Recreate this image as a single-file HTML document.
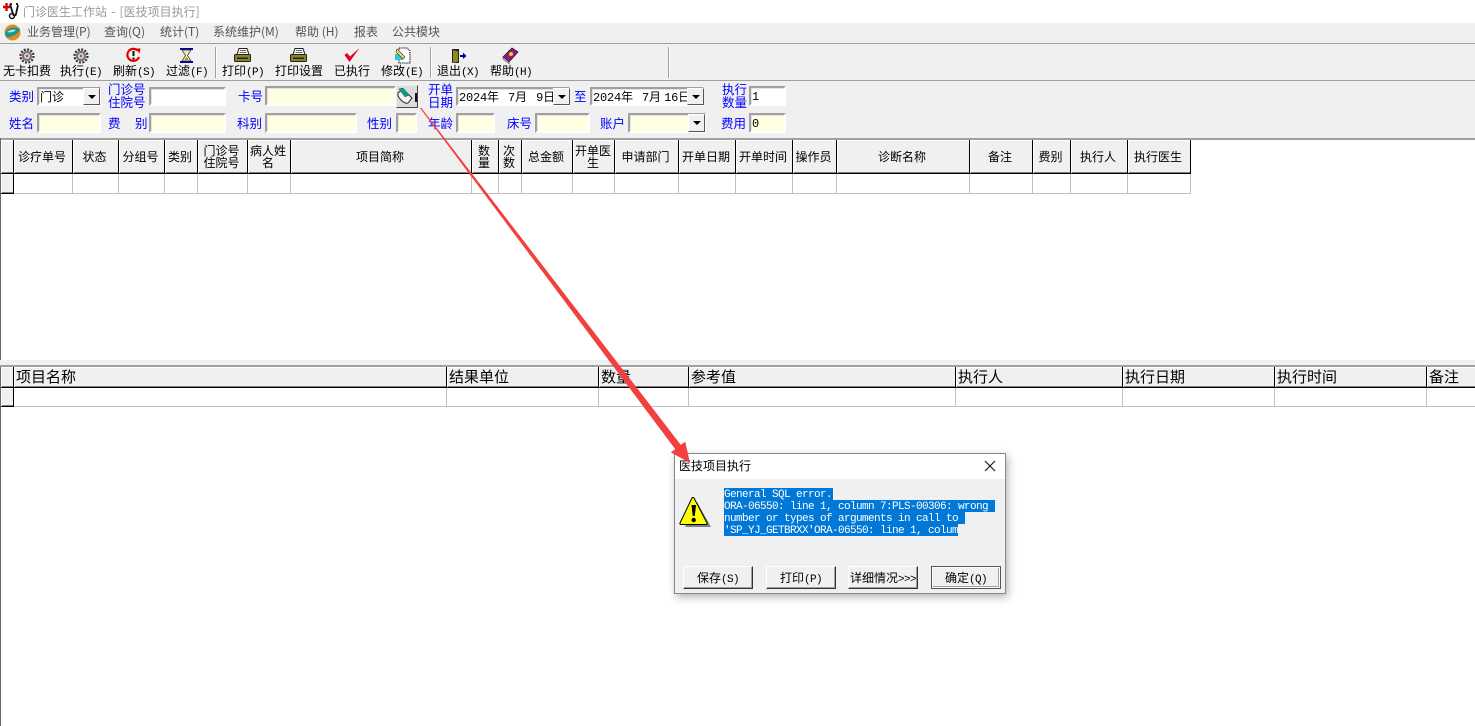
<!DOCTYPE html>
<html lang="zh"><head><meta charset="utf-8"><title>门诊医生工作站</title>
<style>
html,body{margin:0;padding:0;background:#fff}
#p{position:relative;width:1475px;height:726px;overflow:hidden;background:#fff;font:12px/12px "WenQuanYi Zen Hei","Noto Sans CJK SC","Liberation Sans",sans-serif;color:#000}
#p div,#p svg{position:absolute;box-sizing:border-box}
.t{white-space:nowrap;height:12px;line-height:12px}
.b{color:#0000ff;font-size:12.5px}
.m{color:#555;white-space:nowrap;height:12px;top:26px}
.tb{white-space:nowrap;top:65px;height:12px}
.L{font-family:"Liberation Mono",monospace;font-size:11px;letter-spacing:-.6px;white-space:pre}
.D{font-family:"Liberation Mono",monospace;font-size:12px;letter-spacing:-.2px;white-space:pre}
.sep{top:47px;width:2px;height:31px;border-left:1px solid #a0a0a0;border-right:1px solid #fff}
.i{border:2px solid;border-color:#a0a0a0 #fff #fff #a0a0a0;background:#ffffe1;box-shadow:inset 1px 1px 0 #e3e3e3;font-size:12px;padding:2px 0 0 1px;white-space:nowrap}
.w{background:#fff}
.dd{width:17px;background:#f0f0f0;border:1px solid;border-color:#fff #555 #555 #fff}
.dd:after{content:"";position:absolute;left:4px;top:6px;border:4px solid transparent;border-top:4px solid #000;border-bottom:0}
.h{background:#f0f0f0;border-right:1px solid #000;border-bottom:1px solid #000;box-shadow:inset 1px 1px 0 #fff,inset 0 -1px 0 #808080;text-align:center;align-items:center;justify-content:center;line-height:12px;overflow:hidden;padding-right:2px}
#p .h{display:flex}
#p .q{font-size:15px;justify-content:flex-start;padding-left:2px;padding-right:0}
.c{border-right:1px solid #c0c0c0;border-bottom:1px solid #c0c0c0;background:#fff}
.dbtn{top:566px;width:70px;height:23px;background:#f0f0f0;border:1px solid;border-color:#fff #333 #333 #fff;box-shadow:inset -1px -1px 0 #a0a0a0;text-align:center;line-height:21px}
.sel{left:724px;height:12px;background:#0078d7;color:#fff;font:11px/15px "Liberation Mono",monospace;letter-spacing:-.6px;white-space:pre}
</style></head><body><div id="p">

<!-- title -->
<svg style="left:2px;top:1px" width="18" height="19" viewBox="0 0 18 19"><path d="M1 6h7M4.500 2v8" stroke="#e00000" stroke-width="2.400" fill="none"/><path d="M8 3l3 10c.5 2 2.500 2 3 0l2-9M10 3l-2 0M16 3l-2 0" stroke="#111" stroke-width="1.800" fill="none"/><circle cx="10" cy="15" r="2.500" fill="none" stroke="#111" stroke-width="1.500"/></svg>
<div class="t" style="left:23px;top:6px;color:#999;font-size:12px;word-spacing:1.500px">门诊医生工作站 - [医技项目执行]</div>

<!-- menu -->
<div style="left:0;top:23px;width:1475px;height:20px;background:#f0f0f0"></div>
<svg style="left:4px;top:24px" width="17" height="17" viewBox="0 0 17 17"><circle cx="8.500" cy="8.500" r="8" fill="#e98a1f"/><path d="M1 9c3-6 10-7 15-4-1 5-9 9-14 8z" fill="#17988c"/><path d="M3 8c3-2 6-3 9-2-2 2-6 3-9 2z" fill="#bfe6e0"/></svg>
<div class="m" style="left:27px">业务管理(P)</div>
<div class="m" style="left:104px">查询(Q)</div>
<div class="m" style="left:160px">统计(T)</div>
<div class="m" style="left:213px">系统维护(M)</div>
<div class="m" style="left:295px">帮助 (H)</div>
<div class="m" style="left:354px">报表</div>
<div class="m" style="left:392px">公共模块</div>

<!-- toolbar + form bg -->
<div style="left:0;top:43px;width:1475px;height:96px;background:#f0f0f0"></div>
<div style="left:0;top:43px;width:1475px;height:1px;background:#a0a0a0"></div>
<div style="left:0;top:80px;width:1475px;height:1px;background:#a0a0a0"></div>
<div class="sep" style="left:215px"></div><div class="sep" style="left:430px"></div><div class="sep" style="left:668px"></div>

<svg style="left:19px;top:48px" width="16" height="16" viewBox="0 0 16 16"><circle cx="8" cy="8" r="5.200" fill="#777"/><circle cx="8" cy="8" r="6.500" fill="none" stroke="#333" stroke-width="2.200" stroke-dasharray="2 1.400"/><circle cx="8" cy="8" r="3" fill="#e8c8c8"/><circle cx="8" cy="8" r="1.200" fill="#666"/></svg>
<svg style="left:73px;top:48px" width="16" height="16" viewBox="0 0 16 16"><circle cx="8" cy="8" r="5.200" fill="#777"/><circle cx="8" cy="8" r="6.500" fill="none" stroke="#333" stroke-width="2.200" stroke-dasharray="2 1.400"/><circle cx="8" cy="8" r="3" fill="#e8c8c8"/><circle cx="8" cy="8" r="1.200" fill="#666"/></svg>
<svg style="left:125px;top:47px" width="17" height="17" viewBox="0 0 17 17"><path d="M12.500 3.500A6 6 0 1 0 14 10" fill="none" stroke="#e00000" stroke-width="2.200"/><path d="M10.500 1.500l5 0-1 5z" fill="#e00000"/><rect x="7.500" y="4" width="2" height="5" fill="#111"/><rect x="7.500" y="10.500" width="2" height="2" fill="#111"/></svg>
<svg style="left:179px;top:47px" width="15" height="17" viewBox="0 0 15 17"><rect x="1" y="1" width="13" height="2" fill="#0000a0"/><rect x="1" y="14" width="13" height="2" fill="#0000a0"/><path d="M3 3h9L8.500 8.500 12 14H3l3.500-5.500z" fill="#f0e8b0" stroke="#333" stroke-width=".7"/><path d="M5.500 13l2-3 2 3z" fill="#c08020"/></svg>
<svg style="left:234px;top:48px" width="17" height="15" viewBox="0 0 17 15"><path d="M5 .5h8l2 6H3z" fill="#fff" stroke="#222"/><path d="M6 2.500h6M5.500 4.500h7" stroke="#333" stroke-width=".7"/><rect x=".5" y="6.500" width="16" height="7" rx="1" fill="#8a8520" stroke="#222"/><rect x="3" y="9.500" width="11" height="1.500" fill="#222"/></svg>
<svg style="left:290px;top:48px" width="17" height="15" viewBox="0 0 17 15"><path d="M5 .5h8l2 6H3z" fill="#fff" stroke="#222"/><path d="M6 2.500h6M5.500 4.500h7" stroke="#333" stroke-width=".7"/><rect x=".5" y="6.500" width="16" height="7" rx="1" fill="#8a8520" stroke="#222"/><rect x="3" y="9.500" width="11" height="1.500" fill="#222"/></svg>
<svg style="left:344px;top:47px" width="16" height="16" viewBox="0 0 16 16"><path d="M.5 8l5 7L15.500 1 6 9.500 3 6z" fill="#e8001c"/></svg>
<svg style="left:394px;top:47px" width="17" height="17" viewBox="0 0 17 17"><path d="M5 1h8l3 3v12H5z" fill="#fff" stroke="#222" stroke-dasharray="1.500 .7"/><rect x="1" y="7" width="8" height="6" fill="#30c8d8"/><path d="M3 2l8 8-2 2-7-7z" fill="#f2e050" stroke="#333" stroke-width=".6"/></svg>
<svg style="left:451px;top:48px" width="16" height="16" viewBox="0 0 16 16"><path d="M1 1h7v14H1z" fill="#222"/><path d="M2 2l5 1.500v10L2 15z" fill="#8f8a1d"/><path d="M9 7h3V4.500L15.500 8 12 11V9H9z" fill="#000090"/></svg>
<svg style="left:502px;top:47px" width="17" height="17" viewBox="0 0 17 17"><path d="M1 10L10 1l6 4-9 10z" fill="#8e1a7e" stroke="#311" stroke-width=".8"/><path d="M1 10l6 5v1.500L1 12z" fill="#eee" stroke="#333" stroke-width=".6"/><circle cx="9" cy="7" r="2" fill="#e8d020"/></svg>

<div class="tb" style="left:3px">无卡扣费</div>
<div class="tb" style="left:60px">执行<span class="L">(E)</span></div>
<div class="tb" style="left:113px">刷新<span class="L">(S)</span></div>
<div class="tb" style="left:166px">过滤<span class="L">(F)</span></div>
<div class="tb" style="left:222px">打印<span class="L">(P)</span></div>
<div class="tb" style="left:275px">打印设置</div>
<div class="tb" style="left:334px">已执行</div>
<div class="tb" style="left:381px">修改<span class="L">(E)</span></div>
<div class="tb" style="left:437px">退出<span class="L">(X)</span></div>
<div class="tb" style="left:490px">帮助<span class="L">(H)</span></div>

<!-- form row 1 -->
<div class="t b" style="left:9px;top:90px">类别</div>
<div class="i w" style="left:37px;top:87px;width:64px;height:19px">门诊</div>
<div class="dd" style="left:83px;top:88px;height:17px"></div>
<div class="t b" style="left:108px;top:83px">门诊号</div>
<div class="t b" style="left:108px;top:96px">住院号</div>
<div class="i w" style="left:149px;top:87px;width:77px;height:19px"></div>
<div class="t b" style="left:238px;top:90px">卡号</div>
<div class="i" style="left:265px;top:86px;width:131px;height:20px"></div>
<div style="left:396px;top:85px;width:22px;height:23px;background:#dcdcdc;border:1px solid;border-color:#eee #444 #444 #eee"></div>
<svg style="left:397px;top:87px" width="16" height="19" viewBox="0 0 16 19"><path d="M1 6l5-4 9 9-4 5c-3 1-7-2-10-7z" fill="#f4f4f4" stroke="#222"/><path d="M2 2l4-1 6 7-4 2z" fill="#0a9f80" stroke="#245" stroke-width=".5"/></svg>
<div style="left:415px;top:93px;width:2px;height:9px;background:#111"></div>
<div class="t b" style="left:428px;top:83px">开单</div>
<div class="t b" style="left:428px;top:96px">日期</div>
<div class="i w" style="left:456px;top:87px;width:114px;height:19px;padding-left:1px"><span class="D">2024</span>年<span class="D" style="margin-left:9px">7</span>月<span class="D" style="margin-left:9px">9</span>日</div>
<div class="dd" style="left:553px;top:88px;height:17px"></div>
<div class="t b" style="left:574px;top:90px">至</div>
<div class="i w" style="left:590px;top:87px;width:114px;height:19px;padding-left:1px"><span class="D">2024</span>年<span class="D" style="margin-left:9px">7</span>月<span class="D" style="margin-left:3px">16</span>日</div>
<div class="dd" style="left:687px;top:88px;height:17px"></div>
<div class="t b" style="left:722px;top:83px">执行</div>
<div class="t b" style="left:722px;top:96px">数量</div>
<div class="i w" style="left:749px;top:86px;width:37px;height:20px"><span class="D">1</span></div>

<!-- form row 2 -->
<div class="t b" style="left:9px;top:117px">姓名</div>
<div class="i" style="left:37px;top:113px;width:64px;height:20px"></div>
<div class="t b" style="left:108px;top:117px">费</div>
<div class="t b" style="left:135px;top:117px">别</div>
<div class="i" style="left:149px;top:113px;width:77px;height:20px"></div>
<div class="t b" style="left:237px;top:117px">科别</div>
<div class="i" style="left:265px;top:113px;width:92px;height:20px"></div>
<div class="t b" style="left:367px;top:117px">性别</div>
<div class="i" style="left:396px;top:113px;width:21px;height:20px"></div>
<div class="t b" style="left:428px;top:117px">年龄</div>
<div class="i" style="left:456px;top:113px;width:39px;height:20px"></div>
<div class="t b" style="left:507px;top:117px">床号</div>
<div class="i" style="left:535px;top:113px;width:55px;height:20px"></div>
<div class="t b" style="left:600px;top:117px">账户</div>
<div class="i" style="left:628px;top:113px;width:78px;height:20px"></div>
<div class="dd" style="left:688px;top:114px;height:18px"></div>
<div class="t b" style="left:721px;top:117px">费用</div>
<div class="i" style="left:749px;top:113px;width:37px;height:20px"><span class="D">0</span></div>

<!-- top grid -->
<div style="left:0;top:138px;width:1475px;height:2px;background:#a0a0a0"></div>
<div style="left:0;top:138px;width:1px;height:588px;background:#666"></div>
<div class="h" style="left:1px;top:140px;width:13px;height:34px"></div>
<div class="h" style="left:1px;top:174px;width:13px;height:20px"></div>
<div class="h" style="left:14px;top:140px;width:59px;height:34px">诊疗单号</div><div class="c" style="left:14px;top:174px;width:59px;height:20px"></div>
<div class="h" style="left:73px;top:140px;width:46px;height:34px">状态</div><div class="c" style="left:73px;top:174px;width:46px;height:20px"></div>
<div class="h" style="left:119px;top:140px;width:46px;height:34px">分组号</div><div class="c" style="left:119px;top:174px;width:46px;height:20px"></div>
<div class="h" style="left:165px;top:140px;width:33px;height:34px">类别</div><div class="c" style="left:165px;top:174px;width:33px;height:20px"></div>
<div class="h" style="left:198px;top:140px;width:50px;height:34px">门诊号<br>住院号</div><div class="c" style="left:198px;top:174px;width:50px;height:20px"></div>
<div class="h" style="left:248px;top:140px;width:43px;height:34px">病人姓<br>名</div><div class="c" style="left:248px;top:174px;width:43px;height:20px"></div>
<div class="h" style="left:291px;top:140px;width:181px;height:34px">项目简称</div><div class="c" style="left:291px;top:174px;width:181px;height:20px"></div>
<div class="h" style="left:472px;top:140px;width:27px;height:34px">数<br>量</div><div class="c" style="left:472px;top:174px;width:27px;height:20px"></div>
<div class="h" style="left:499px;top:140px;width:23px;height:34px">次<br>数</div><div class="c" style="left:499px;top:174px;width:23px;height:20px"></div>
<div class="h" style="left:522px;top:140px;width:51px;height:34px">总金额</div><div class="c" style="left:522px;top:174px;width:51px;height:20px"></div>
<div class="h" style="left:573px;top:140px;width:42px;height:34px;padding-right:1px">开单医<br>生</div><div class="c" style="left:573px;top:174px;width:42px;height:20px"></div>
<div class="h" style="left:615px;top:140px;width:64px;height:34px">申请部门</div><div class="c" style="left:615px;top:174px;width:64px;height:20px"></div>
<div class="h" style="left:679px;top:140px;width:57px;height:34px">开单日期</div><div class="c" style="left:679px;top:174px;width:57px;height:20px"></div>
<div class="h" style="left:736px;top:140px;width:57px;height:34px">开单时间</div><div class="c" style="left:736px;top:174px;width:57px;height:20px"></div>
<div class="h" style="left:793px;top:140px;width:44px;height:34px">操作员</div><div class="c" style="left:793px;top:174px;width:44px;height:20px"></div>
<div class="h" style="left:837px;top:140px;width:133px;height:34px">诊断名称</div><div class="c" style="left:837px;top:174px;width:133px;height:20px"></div>
<div class="h" style="left:970px;top:140px;width:63px;height:34px">备注</div><div class="c" style="left:970px;top:174px;width:63px;height:20px"></div>
<div class="h" style="left:1033px;top:140px;width:38px;height:34px">费别</div><div class="c" style="left:1033px;top:174px;width:38px;height:20px"></div>
<div class="h" style="left:1071px;top:140px;width:57px;height:34px">执行人</div><div class="c" style="left:1071px;top:174px;width:57px;height:20px"></div>
<div class="h" style="left:1128px;top:140px;width:63px;height:34px">执行医生</div><div class="c" style="left:1128px;top:174px;width:63px;height:20px"></div>

<!-- splitter -->
<div style="left:0;top:360px;width:1475px;height:5px;background:#f0f0f0"></div>

<!-- bottom grid -->
<div style="left:0;top:365px;width:1475px;height:2px;background:#a0a0a0"></div>
<div class="h" style="left:1px;top:367px;width:13px;height:21px"></div>
<div class="h" style="left:1px;top:388px;width:13px;height:19px"></div>
<div class="h q" style="left:14px;top:367px;width:433px;height:21px">项目名称</div><div class="c" style="left:14px;top:388px;width:433px;height:19px"></div>
<div class="h q" style="left:447px;top:367px;width:152px;height:21px">结果单位</div><div class="c" style="left:447px;top:388px;width:152px;height:19px"></div>
<div class="h q" style="left:599px;top:367px;width:90px;height:21px">数量</div><div class="c" style="left:599px;top:388px;width:90px;height:19px"></div>
<div class="h q" style="left:689px;top:367px;width:267px;height:21px">参考值</div><div class="c" style="left:689px;top:388px;width:267px;height:19px"></div>
<div class="h q" style="left:956px;top:367px;width:167px;height:21px">执行人</div><div class="c" style="left:956px;top:388px;width:167px;height:19px"></div>
<div class="h q" style="left:1123px;top:367px;width:152px;height:21px">执行日期</div><div class="c" style="left:1123px;top:388px;width:152px;height:19px"></div>
<div class="h q" style="left:1275px;top:367px;width:152px;height:21px">执行时间</div><div class="c" style="left:1275px;top:388px;width:152px;height:19px"></div>
<div class="h q" style="left:1427px;top:367px;width:60px;height:21px">备注</div><div class="c" style="left:1427px;top:388px;width:60px;height:19px"></div>

<!-- dialog -->
<div style="left:674px;top:453px;width:332px;height:141px;background:#f0f0f0;border:1px solid #888;box-shadow:2px 3px 8px rgba(0,0,0,.3)"></div>
<div style="left:675px;top:454px;width:330px;height:25px;background:#fff"></div>
<div class="t" style="left:679px;top:460px">医技项目执行</div>
<svg style="left:984px;top:460px" width="12" height="12" viewBox="0 0 12 12"><path d="M1 1l10 10M11 1L1 11" stroke="#111" stroke-width="1.100"/></svg>
<svg style="left:679px;top:497px" width="34" height="34" viewBox="0 0 34 34"><path d="M18 5L32 30H6z" fill="#808080"/><path d="M15 1L28 26c.4 1-.3 1.500-1 1.500H2c-.8 0-1.300-.7-1-1.500L13 1c.5-.8 1.500-.8 2 0z" fill="#ffff00" stroke="#000" stroke-width="1"/><path d="M12.500 8h4.500l-1.200 11h-2.100z" fill="#000"/><circle cx="14.700" cy="23" r="2.200" fill="#000"/></svg>
<div class="sel" style="top:488px;width:109px">General SQL error.</div>
<div class="sel" style="top:500px;width:271px">ORA-06550: line 1, column 7:PLS-00306: wrong</div>
<div class="sel" style="top:512px;width:241px">number or types of arguments in call to</div>
<div class="sel" style="top:524px;width:234px">'SP_YJ_GETBRXX'ORA-06550: line 1, colum</div>
<div class="dbtn" style="left:683px">保存<span class="L">(S)</span></div>
<div class="dbtn" style="left:766px">打印<span class="L">(P)</span></div>
<div class="dbtn" style="left:848px">详细情况<span class="L">&gt;&gt;&gt;</span></div>
<div class="dbtn" style="left:931px;border-color:#555;box-shadow:inset 0 0 0 1px #fff,inset -2px -2px 0 #a0a0a0">确定<span class="L">(Q)</span></div>

<!-- red arrow -->
<svg style="left:0;top:0" width="1475" height="726" viewBox="0 0 1475 726"><path d="M420 108L421 107.500L680.800 444.900L685.200 441.600L690 463L670.800 452.400L675.200 449.100Z" fill="#f2403f"/></svg>
</div></body></html>
